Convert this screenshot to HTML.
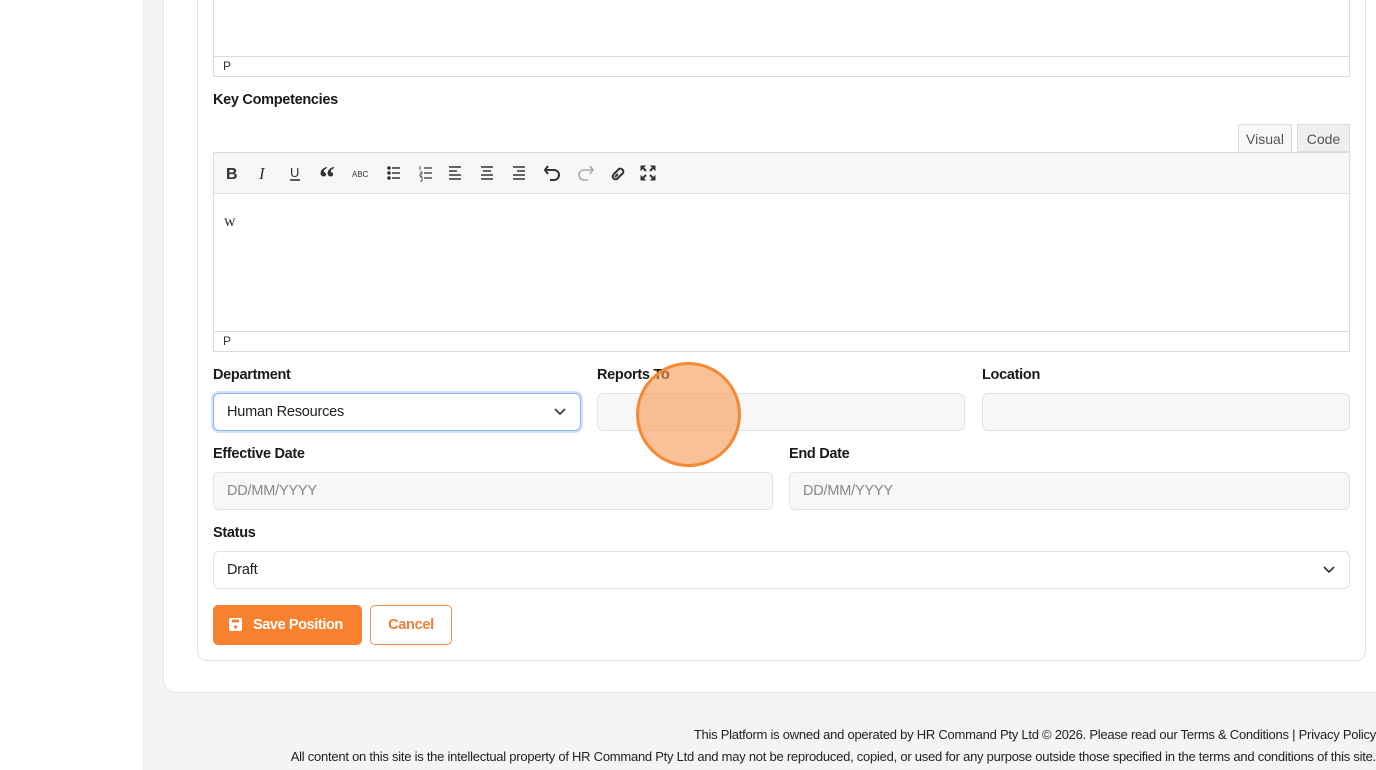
<!DOCTYPE html><html><head><style>
*{box-sizing:border-box;margin:0;padding:0}
body{width:1376px;height:770px;overflow:hidden;background:#fff;font-family:"Liberation Sans",sans-serif;position:relative;color:#111}
.a{position:absolute}
.gray{left:142px;top:0;width:1234px;height:770px;background:#f4f4f4}
.card{left:163px;top:-20px;width:1240px;height:713px;background:#fff;border:1px solid #e6e6e6;border-radius:12px}
.inner{left:197px;top:-20px;width:1169px;height:681px;border:1px solid #e3e3e3;border-radius:10px;background:#fff}
.lbl{font-size:14.5px;font-weight:bold;color:#1a1a1a;letter-spacing:-.3px}
.box{border:1px solid #dcdcdc;background:#fff}
.inp{border:1px solid #e2e2e2;background:#f7f7f7;border-radius:6px;font-size:14.5px;color:#888;padding-left:13px;line-height:36px;letter-spacing:-.2px}
.sb{font-size:12px;color:#333;padding-left:9px;line-height:19px;border:1px solid #dcdcdc;background:#fff}
.ft{left:0;width:1376px;text-align:right;font-size:13px;color:#222;letter-spacing:-.25px;white-space:nowrap}
</style></head><body>
<div class="a gray"></div>
<div class="a card"></div>
<div class="a inner"></div>
<div class="a box" style="left:213px;top:-5px;width:1137px;height:82px"></div>
<div class="a sb" style="left:213px;top:56px;width:1137px;height:21px">P</div>
<div class="a lbl" style="left:213px;top:92px">Key Competencies</div>
<div class="a" style="left:1238px;top:124px;width:54px;height:29px;border:1px solid #dcdcdc;border-bottom:none;background:#f6f7f7;font-size:14px;color:#555;text-align:center;line-height:28px">Visual</div>
<div class="a" style="left:1297px;top:124px;width:53px;height:28px;border:1px solid #dcdcdc;background:#efefef;font-size:14px;color:#555;text-align:center;line-height:28px">Code</div>
<div class="a" style="left:213px;top:152px;width:1137px;height:42px;border:1px solid #dcdcdc;background:#f6f7f7;box-shadow:0 1px 1px #ddd"></div>
<svg class="a" style="left:220px;top:162px" width="450" height="22" viewBox="0 0 450 22" fill="none" stroke="#333" stroke-width="1.6">
<text x="6" y="17" font-family="Liberation Sans" font-weight="bold" font-size="16" fill="#333" stroke="none">B</text>
<text x="39" y="17" font-family="Liberation Serif" font-style="italic" font-size="17" fill="#333" stroke="none">I</text>
<text x="70" y="15" font-family="Liberation Sans" font-size="13" fill="#333" stroke="none">U</text><line x1="70" y1="18" x2="80" y2="18"/>
<text x="99" y="26" font-family="Liberation Serif" font-weight="bold" font-size="32" fill="#333" stroke="none">“</text>
<text x="132" y="15" font-family="Liberation Sans" font-size="8" fill="#333" stroke="none">ABC</text>
<g><circle cx="169" cy="6" r="1" fill="#333"/><circle cx="169" cy="11" r="1" fill="#333"/><circle cx="169" cy="16" r="1" fill="#333"/><path d="M172 6h8M172 11h8M172 16h8"/></g>
<g><path d="M204 6h8M204 11h8M204 16h8" stroke-width="1.2"/><path d="M200 4v4M200 10h2v2h-2v2h2M200 15h2v4h-2" stroke-width=".8"/></g>
<path d="M229 5h12M229 9h8M229 13h12M229 17h12"/>
<path d="M261 5h12M263 9h8M261 13h12M261 17h12"/>
<path d="M293 5h12M297 9h8M293 13h12M293 17h12"/>
<path d="M326 8h8a5 5 0 0 1 0 10h-4M328 4l-3 4 3 4" stroke-width="2"/>
<path d="M372 8h-8a5 5 0 0 0 0 10h4M370 4l3 4-3 4" stroke="#aaa"/>
<path d="M393 13l6-6a3 3 0 0 1 4 4l-6 6a3 3 0 0 1-4-4M398 12l-3 3" stroke-width="2"/>
<path d="M422 5l4 4M434 5l-4 4M422 17l4-4M434 17l-4-4" stroke-width="2"/>
<path d="M421 4h4l-4 4zM435 4h-4l4 4zM421 18h4l-4-4zM435 18h-4l4-4z" fill="#333" stroke-width="1"/>
</svg>
<div class="a box" style="left:213px;top:194px;width:1137px;height:138px;border-top:none"></div>
<div class="a" style="left:224px;top:213px;font-family:'Liberation Serif',serif;font-size:16px;color:#333">w</div>
<div class="a sb" style="left:213px;top:331px;width:1137px;height:21px">P</div>
<div class="a lbl" style="left:213px;top:367px">Department</div>
<div class="a lbl" style="left:597px;top:367px">Reports To</div>
<div class="a lbl" style="left:982px;top:367px">Location</div>
<div class="a inp" style="left:213px;top:393px;width:368px;height:38px;background:#fff;border:1px solid #8fb3f0;box-shadow:0 0 0 2px #d4e2fb;color:#222">Human Resources</div>
<svg class="a" style="left:553px;top:406px" width="14" height="12" fill="none" stroke="#333" stroke-width="1.6"><path d="M2 3l5 5 5-5"/></svg>
<div class="a inp" style="left:597px;top:393px;width:368px;height:38px"></div>
<div class="a inp" style="left:982px;top:393px;width:368px;height:38px"></div>
<div class="a lbl" style="left:213px;top:446px">Effective Date</div>
<div class="a lbl" style="left:789px;top:446px">End Date</div>
<div class="a inp" style="left:213px;top:472px;width:560px;height:38px">DD/MM/YYYY</div>
<div class="a inp" style="left:789px;top:472px;width:561px;height:38px">DD/MM/YYYY</div>
<div class="a lbl" style="left:213px;top:525px">Status</div>
<div class="a inp" style="left:213px;top:551px;width:1137px;height:38px;background:#fff;color:#222">Draft</div>
<svg class="a" style="left:1322px;top:564px" width="14" height="12" fill="none" stroke="#333" stroke-width="1.6"><path d="M2 3l5 5 5-5"/></svg>
<div class="a" style="left:213px;top:605px;width:149px;height:40px;background:#f7812f;border-radius:5px;color:#fff;font-weight:bold;font-size:14.5px;line-height:40px;padding-left:40px;letter-spacing:-.4px">Save Position</div>
<svg class="a" style="left:229px;top:618px" width="13" height="13"><rect x="0" y="0" width="13" height="13" rx="2" fill="#fff"/><rect x="3" y="1.5" width="7" height="3" fill="#f7812f"/><circle cx="6.5" cy="9" r="1.6" fill="#f7812f"/></svg>
<div class="a" style="left:370px;top:605px;width:82px;height:40px;border:1px solid #f0904a;border-radius:5px;color:#ef7d33;font-weight:bold;font-size:14.5px;line-height:38px;text-align:center;letter-spacing:-.3px">Cancel</div>
<div class="a" style="left:636px;top:362px;width:105px;height:105px;border-radius:50%;background:rgba(247,150,80,.6);border:3px solid #f48a33"></div>
<div class="a ft" style="top:727px">This Platform is owned and operated by HR Command Pty Ltd © 2026. Please read our Terms &amp; Conditions | Privacy Policy</div>
<div class="a ft" style="top:749px">All content on this site is the intellectual property of HR Command Pty Ltd and may not be reproduced, copied, or used for any purpose outside those specified in the terms and conditions of this site.</div>
</body></html>
